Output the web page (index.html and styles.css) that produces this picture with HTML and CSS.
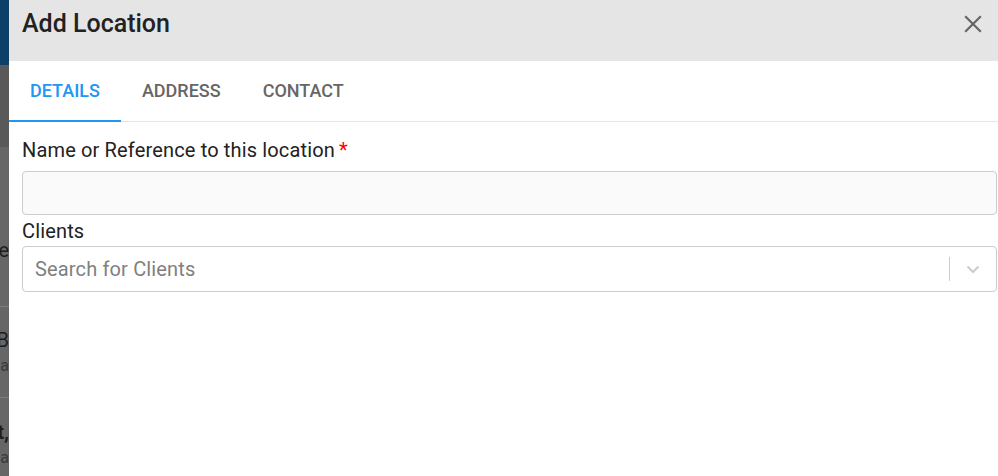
FILE: index.html
```html
<!DOCTYPE html>
<html>
<head>
<meta charset="utf-8">
<link rel="stylesheet" href="styles.css">
</head>
<body>
<div class="page">
  <div class="backdrop">
    <div class="bd-top"></div>
    <div class="bd-band"></div>
    <div class="bd-row bd-row2"><span class="bd-big">Home</span></div>
    <div class="bd-row bd-row3"><span class="bd-big">AB</span><span class="bd-small">Jana</span></div>
    <div class="bd-row bd-row4"><span class="bd-bold">Test,</span><span class="bd-small">Ja</span></div>
  </div>
  <div class="dialog">
    <div class="dlg-header">
      <h1 class="dlg-title">Add Location</h1>
      <button class="close-btn" aria-label="Close">
        <svg width="18" height="18" viewBox="0 0 18 18"><path d="M1.2 1.2 L16.8 16.8 M16.8 1.2 L1.2 16.8" stroke="#666" stroke-width="2.2" fill="none"/></svg>
      </button>
    </div>
    <div class="tabs">
      <div class="tab active">Details</div>
      <div class="tab">Address</div>
      <div class="tab">Contact</div>
    </div>
    <div class="dlg-body">
      <label class="field-label">Name or Reference to this location<span class="req">*</span></label>
      <div class="text-input"></div>
      <label class="field-label field-label2">Clients</label>
      <div class="select">
        <span class="placeholder">Search for Clients</span>
        <span class="sep"></span>
        <span class="chev">
          <svg width="20" height="20" viewBox="0 0 20 20"><path d="M4.5 7.5 L10 13 L15.5 7.5" stroke="#ccc" stroke-width="2" fill="none"/></svg>
        </span>
      </div>
    </div>
  </div>
</div>
</body>
</html>
```

FILE: styles.css
```css
html, body {
  margin: 0;
  padding: 0;
  width: 998px;
  height: 476px;
  overflow: hidden;
  background: #fff;
  font-family: Roboto, "Liberation Sans", sans-serif;
}

.page {
  display: flex;
  height: 476px;
}

.backdrop {
  width: 9px;
  flex: none;
  display: flex;
  flex-direction: column;
  overflow: hidden;
  background: #666;
}

.bd-top {
  height: 65px;
  background: #0d3f68;
  flex: none;
}

.bd-band {
  height: 82px;
  background: #595959;
  flex: none;
}

.bd-row {
  display: flex;
  flex-direction: column;
  align-items: flex-end;
  border-bottom: 1px solid #7d7d7d;
  flex: none;
  box-sizing: border-box;
}

.bd-row2 { height: 160px; padding-top: 90px; }
.bd-row3 { height: 91px; padding-top: 20px; }
.bd-row4 { flex: 1; border-bottom: none; padding-top: 21px; }

.bd-big { font-size: 20px; line-height: 26px; color: #1e1e1e; white-space: nowrap; }
.bd-small { font-size: 16px; line-height: 26px; color: #3a3a3a; white-space: nowrap; }
.bd-bold { font-size: 20px; font-weight: 700; line-height: 26px; color: #1e1e1e; white-space: nowrap; }

.dialog {
  flex: 1;
  display: flex;
  flex-direction: column;
  background: #fff;
}

.dlg-header {
  height: 61px;
  box-sizing: border-box;
  background: #e5e5e5;
  display: flex;
  align-items: flex-start;
  justify-content: space-between;
  padding: 8px 16px 0 13px;
  flex: none;
}

.dlg-title {
  margin: 0;
  font-size: 25px;
  line-height: 32px;
  font-weight: 500;
  color: #222;
}

.close-btn {
  border: none;
  background: none;
  padding: 0;
  margin-top: 7px;
  width: 18px;
  height: 18px;
  display: flex;
}

.tabs {
  display: flex;
  height: 60px;
  border-bottom: 1px solid #e5e5e5;
  flex: none;
}

.tab {
  padding: 0 21px;
  display: flex;
  align-items: center;
  font-size: 18px;
  font-weight: 500;
  text-transform: uppercase;
  color: #666;
  border-bottom: 2px solid transparent;
  margin-bottom: -1px;
}

.tab.active {
  color: #2196f3;
  border-bottom-color: #2196f3;
}

.dlg-body {
  padding: 14px 1px 0 13px;
  display: flex;
  flex-direction: column;
}

.field-label {
  font-size: 20px;
  line-height: 28px;
  letter-spacing: 0.15px;
  color: #222;
}

.req {
  color: #f00;
  margin-left: 4px;
}

.text-input {
  height: 42px;
  margin-top: 7px;
  background: #fafafa;
  border: 1px solid #ccc;
  border-radius: 4px;
}

.field-label2 {
  margin-top: 2px;
}

.select {
  height: 44px;
  margin-top: 1px;
  border: 1px solid #ccc;
  border-radius: 4px;
  display: flex;
  align-items: center;
  padding-left: 12px;
}

.placeholder {
  flex: 1;
  font-size: 20px;
  letter-spacing: 0.15px;
  color: #808080;
}

.sep {
  width: 1px;
  height: 24px;
  background: #ccc;
}

.chev {
  width: 46px;
  display: flex;
  justify-content: center;
  align-items: center;
}
```
